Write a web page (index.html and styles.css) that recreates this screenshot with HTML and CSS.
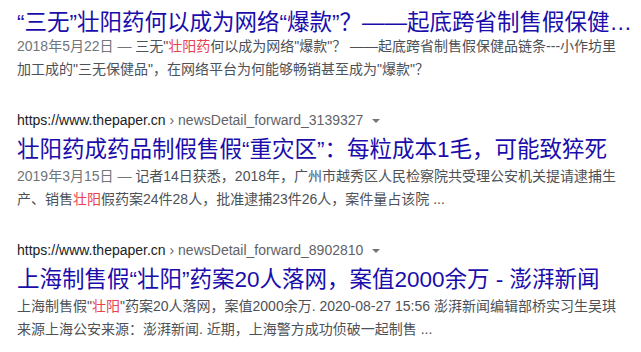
FILE: index.html
```html
<!DOCTYPE html>
<html lang="zh-CN">
<head>
<meta charset="utf-8">
<title>壮阳药 - 搜索结果</title>
<link rel="stylesheet" href="styles.css">
</head>
<body>
<div class="results">
  <div class="result first">
    <h3 class="title">“三无”壮阳药何以成为网络“爆款”？——起底跨省制售假保健…</h3>
    <div class="snippet"><span class="date">2018年5月22日 — </span>三无"<em>壮阳药</em>何以成为网络"爆款"？ ——起底跨省制售假保健品链条---小作坊里<br>加工成的"三无保健品"，在网络平台为何能够畅销甚至成为"爆款"？</div>
  </div>
  <div class="result">
    <div class="url"><span class="domain">https://www.thepaper.cn</span><span class="path"> › newsDetail_forward_3139327</span><span class="caret"></span></div>
    <h3 class="title">壮阳药成药品制假售假“重灾区”：每粒成本1毛，可能致猝死</h3>
    <div class="snippet"><span class="date">2019年3月15日 — </span>记者14日获悉，2018年，广州市越秀区人民检察院共受理公安机关提请逮捕生<br>产、销售<em>壮阳</em>假药案24件28人，批准逮捕23件26人，案件量占该院 ...</div>
  </div>
  <div class="result">
    <div class="url"><span class="domain">https://www.thepaper.cn</span><span class="path"> › newsDetail_forward_8902810</span><span class="caret"></span></div>
    <h3 class="title">上海制售假“壮阳”药案20人落网，案值2000余万 - 澎湃新闻</h3>
    <div class="snippet">上海制售假"<em>壮阳</em>"药案20人落网，案值2000余万. 2020-08-27 15:56 澎湃新闻编辑部桥实习生吴琪<br>来源上海公安来源：澎湃新闻. 近期，上海警方成功侦破一起制售 ...</div>
  </div>
</div>
</body>
</html>
```

FILE: styles.css
```css
html, body {
  margin: 0;
  background: #ffffff;
}

body {
  font-family: "Liberation Sans", Arial, "Noto Sans CJK SC", sans-serif;
}

.results {
  padding: 9px 0 0 17px;
}

.result + .result {
  margin-top: 29px;
}

.url {
  display: flex;
  align-items: center;
  height: 20px;
  font-size: 14px;
  line-height: 20px;
  white-space: nowrap;
}

.domain {
  color: #202124;
}

.path {
  color: #5f6368;
  white-space: pre;
}

.caret {
  width: 0;
  height: 0;
  margin-left: 9px;
  margin-top: 2px;
  border-top: 4px solid #70757a;
  border-left: 4px solid transparent;
  border-right: 4px solid transparent;
}

.title {
  margin: 6px 0 0;
  font-size: 22.5px;
  line-height: 28px;
  font-weight: normal;
  color: #1a0dab;
  white-space: nowrap;
}

.first .title {
  margin-top: 0;
}

.snippet {
  margin-top: 1px;
  font-size: 14px;
  line-height: 23px;
  color: #4d5156;
  white-space: nowrap;
}

.first .snippet {
  margin-top: -2px;
}

.date {
  color: #70757a;
}

.snippet em {
  font-style: normal;
  color: #e8414f;
}
```
